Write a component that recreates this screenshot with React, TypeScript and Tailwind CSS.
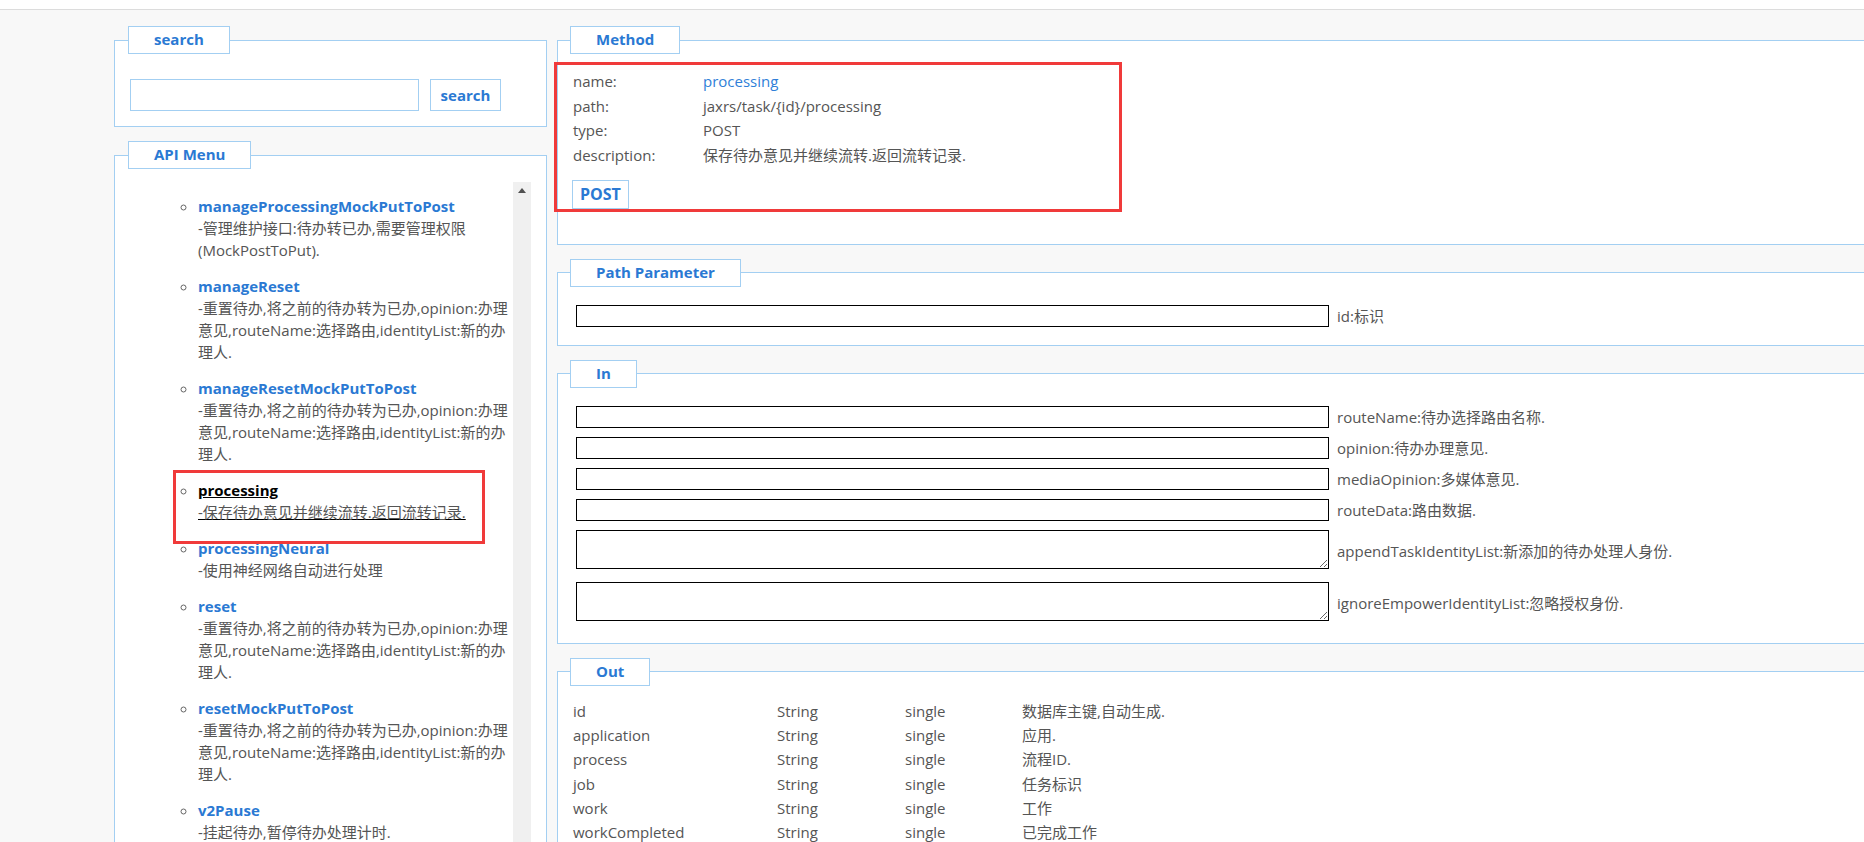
import React from "react";

const resetLines = [
  "-重置待办,将之前的待办转为已办,opinion:办理",
  "意见,routeName:选择路由,identityList:新的办",
  "理人.",
];

type MenuItem = { name: string; lines: string[]; active?: boolean };

const menu: MenuItem[] = [
  { name: "manageProcessingMockPutToPost", lines: ["-管理维护接口:待办转已办,需要管理权限", "(MockPostToPut)."] },
  { name: "manageReset", lines: resetLines },
  { name: "manageResetMockPutToPost", lines: resetLines },
  { name: "processing", lines: ["-保存待办意见并继续流转.返回流转记录."], active: true },
  { name: "processingNeural", lines: ["-使用神经网络自动进行处理"] },
  { name: "reset", lines: resetLines },
  { name: "resetMockPutToPost", lines: resetLines },
  { name: "v2Pause", lines: ["-挂起待办,暂停待办处理计时."] },
];

const inFields = [
  "routeName:待办选择路由名称.",
  "opinion:待办办理意见.",
  "mediaOpinion:多媒体意见.",
  "routeData:路由数据.",
];

const outRows = [
  ["id", "String", "single", "数据库主键,自动生成."],
  ["application", "String", "single", "应用."],
  ["process", "String", "single", "流程ID."],
  ["job", "String", "single", "任务标识"],
  ["work", "String", "single", "工作"],
  ["workCompleted", "String", "single", "已完成工作"],
];

function Box({ title, className, children }: { title: string; className?: string; children?: React.ReactNode }) {
  return (
    <fieldset className={"border border-[#a3cff2] bg-white " + (className || "")}>
      <legend className="-ml-[2px] h-[28px] border border-[#a3cff2] bg-white px-[25px] text-[15px] font-bold leading-[25px] text-[#2a79d3]">
        {title}
      </legend>
      {children}
    </fieldset>
  );
}

export default function App() {
  return (
    <div className="h-[842px] w-full overflow-hidden bg-[#f8f8f8] font-['Open_Sans','Noto_Sans_CJK_SC',sans-serif] text-[15px] text-[#555]">
      <div className="h-[10px] border-b border-[#dcdcdc] bg-white" />
      <div className="flex gap-[10px] pl-[114px] pt-[16px]">
        {/* left column */}
        <div className="relative flex w-[433px] shrink-0 flex-col gap-[14px]">
          <Box title="search" className="px-[15px] pt-[25px] pb-[15px]">
            <div className="flex gap-[11px]">
              <input className="h-[32px] w-[289px] border border-[#a3cff2] bg-white outline-none" />
              <button className="h-[32px] w-[71px] border border-[#a3cff2] bg-white text-[15px] font-bold text-[#2a79d3]">
                search
              </button>
            </div>
          </Box>
          <Box title="API Menu" className="px-[15px] pt-[13px]">
            <div className="flex h-[700px]">
              <ul className="flex-1 list-[circle] pl-[68px] pt-[13px] marker:text-[#666]">
                {menu.map((m) => (
                  <li key={m.name} className="mb-[14px] leading-[22px]">
                    <a
                      className={
                        m.active
                          ? "font-bold text-black underline decoration-black"
                          : "font-bold text-[#2a79d3]"
                      }
                    >
                      {m.name}
                    </a>
                    <div className={m.active ? "underline decoration-black" : ""}>
                      {m.lines.map((l, i) => (
                        <div key={i} className="whitespace-nowrap">
                          {l}
                        </div>
                      ))}
                    </div>
                  </li>
                ))}
              </ul>
              <div className="w-[18px] bg-[#f0f0f0]">
                <div className="flex h-[17px] items-center justify-center">
                  <svg width="8" height="5" viewBox="0 0 8 5">
                    <polygon points="4,0 8,5 0,5" fill="#505050" />
                  </svg>
                </div>
              </div>
            </div>
          </Box>
          <div className="pointer-events-none absolute left-[59px] top-[444px] h-[74px] w-[312px] border-[3px] border-[#f03a3a]" />
        </div>

        {/* right column */}
        <div className="relative flex w-[1400px] shrink-0 flex-col gap-[14px]">
          <Box title="Method" className="pl-[14px] pt-[15px] pb-[35px]">
            <div className="grid grid-cols-[130px_1fr] pl-[1px] leading-[24.67px]">
              <div>name:</div>
              <div className="text-[#2f7fd8]">processing</div>
              <div>path:</div>
              <div>jaxrs/task/{"{id}"}/processing</div>
              <div>type:</div>
              <div>POST</div>
              <div>description:</div>
              <div>保存待办意见并继续流转.返回流转记录.</div>
            </div>
            <button className="mt-[12px] block h-[29px] border border-[#a3cff2] bg-white px-[7px] text-[16px] font-bold text-[#2a79d3]">
              POST
            </button>
          </Box>

          <Box title="Path Parameter" className="pl-[14px] pt-[18px] pb-[18px]">
            <div className="flex items-center gap-[8px] leading-[22px]">
              <input className="ml-[4px] h-[22px] w-[753px] border border-black bg-white outline-none" />
              <span>id:标识</span>
            </div>
          </Box>

          <Box title="In" className="pl-[14px] pt-[18px] pb-[22px]">
            <div className="flex flex-col gap-[9px] leading-[22px]">
              {inFields.map((f) => (
                <div key={f} className="flex items-center gap-[8px]">
                  <input className="ml-[4px] h-[22px] w-[753px] border border-black bg-white outline-none" />
                  <span>{f}</span>
                </div>
              ))}
              <div className="flex items-center gap-[8px]">
                <textarea className="ml-[4px] h-[39px] w-[753px] border border-black bg-white outline-none" />
                <span className="pt-[4px]">appendTaskIdentityList:新添加的待办处理人身份.</span>
              </div>
              <div className="mt-[4px] flex items-center gap-[8px]">
                <textarea className="ml-[4px] h-[39px] w-[753px] border border-black bg-white outline-none" />
                <span className="pt-[4px]">ignoreEmpowerIdentityList:忽略授权身份.</span>
              </div>
            </div>
          </Box>

          <Box title="Out" className="pl-[14px] pt-[13px] pb-[20px]">
            <div className="grid grid-cols-[204px_128px_117px_1fr] pl-[1px] leading-[24.33px]">
              {outRows.map((r) => (
                <React.Fragment key={r[0]}>
                  <div>{r[0]}</div>
                  <div>{r[1]}</div>
                  <div>{r[2]}</div>
                  <div>{r[3]}</div>
                </React.Fragment>
              ))}
            </div>
          </Box>

          <div className="pointer-events-none absolute left-[-3px] top-[36px] h-[150px] w-[568px] border-[3px] border-[#f03a3a]" />
        </div>
      </div>
    </div>
  );
}
